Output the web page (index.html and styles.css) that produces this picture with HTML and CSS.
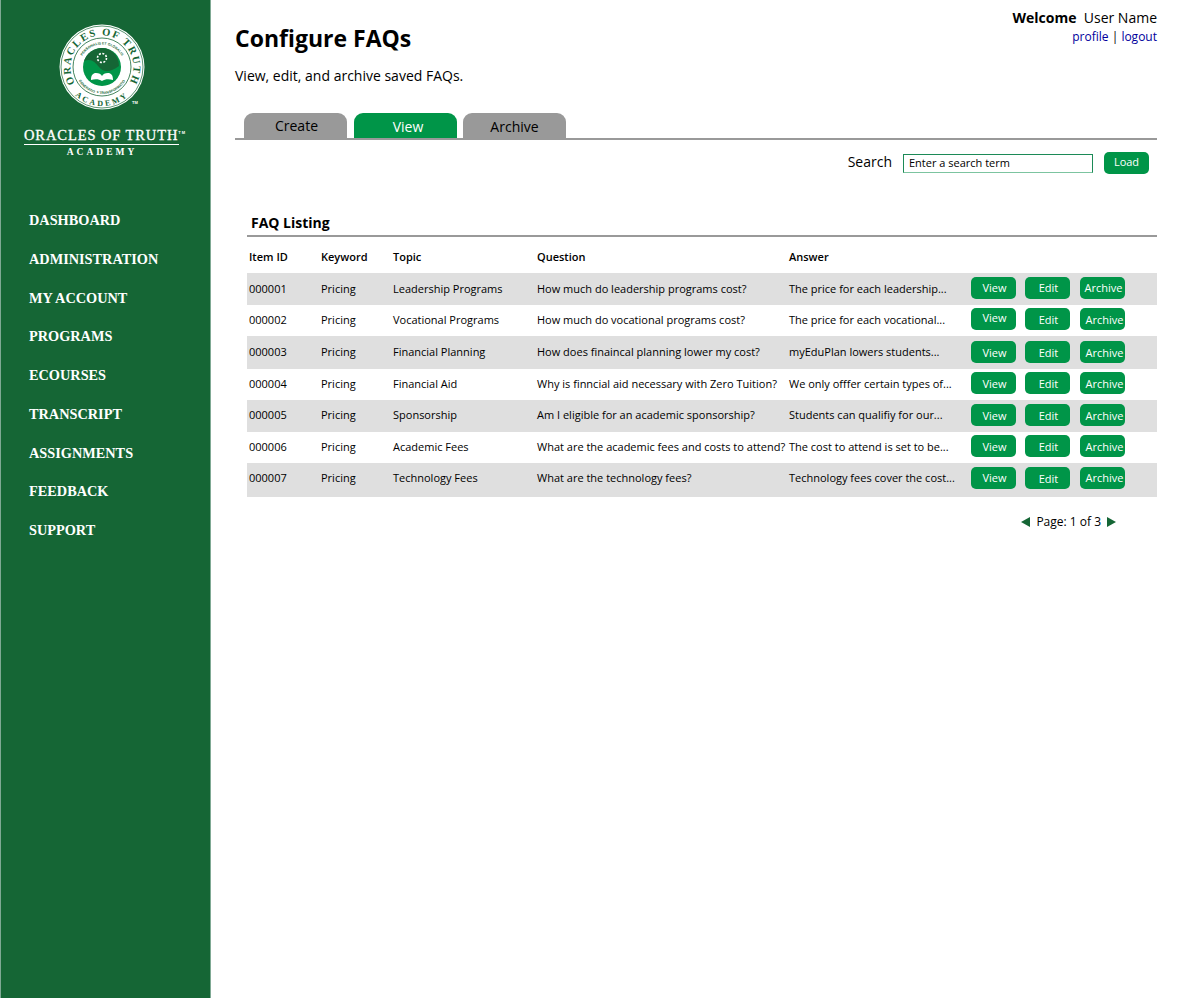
FILE: index.html
```html
<!DOCTYPE html>
<html lang="en">
<head>
  <meta charset="UTF-8">
  <title>Configure FAQs</title>
  <link rel="stylesheet" href="styles.css">
</head>
<body>
<div id="sidebar">
  <div class="logo">
    <svg class="seal" width="90" height="90" viewBox="0 0 90 90">
      <defs>
        <path id="arcName" d="M45 76.500a31.500 31.500 0 0 1 0-63a31.500 31.500 0 0 1 0 63"/>
        <path id="arcAcademy" d="M45 6a39 39 0 0 0 0 78a39 39 0 0 0 0-78"/>
        <path id="arcMottoTop" d="M45 67.500a22.500 22.500 0 0 1 0-45a22.500 22.500 0 0 1 0 45"/>
        <path id="arcMottoBottom" d="M45 18a27 27 0 0 0 0 54a27 27 0 0 0 0-54"/>
      </defs>
      <circle cx="45" cy="45" r="42.500" fill="#fff"/>
      <circle cx="45" cy="45" r="41" fill="none" stroke="#156635" stroke-width="0.7"/>
      <circle cx="45" cy="45" r="29" fill="none" stroke="#156635" stroke-width="0.8"/>
      <circle cx="45" cy="45" r="19" fill="#009548"/>
      <path d="M27 39c7-3 11 1 15 6 4 5 11 6 20-1C62 33 54 26 45 26c-8 0-15 5-18 13z" fill="#156635"/>
      <circle cx="45" cy="36" r="4.500" fill="none" stroke="#fff" stroke-width="1.600" stroke-dasharray="2 1.500"/>
      <path d="M34 58c0-5 2-7 5-7 3 0 5 1 6 3 1-2 3-3 6-3 3 0 5 2 5 7-4-1-8-1-11 1-3-2-7-2-11-1z" fill="#fff"/>
      <text class="seal-name"><textPath href="#arcName" startOffset="50%" text-anchor="middle">ORACLES OF TRUTH</textPath></text>
      <text class="seal-academy"><textPath href="#arcAcademy" startOffset="50%" text-anchor="middle">ACADEMY</textPath></text>
      <text class="seal-motto"><textPath href="#arcMottoTop" startOffset="50%" text-anchor="middle">PERSONALIS ET GLOBALIS</textPath></text>
      <text class="seal-motto"><textPath href="#arcMottoBottom" startOffset="50%" text-anchor="middle">GENERATIO ✦ TRANSFORMATIO</textPath></text>
    </svg>
    <span class="seal-tm">TM</span>
    <div class="logo-name">ORACLES OF TRUTH<sup>TM</sup></div>
    <div class="logo-sub">ACADEMY</div>
  </div>
  <ul class="nav">
    <li>DASHBOARD</li>
    <li>ADMINISTRATION</li>
    <li>MY ACCOUNT</li>
    <li>PROGRAMS</li>
    <li>ECOURSES</li>
    <li>TRANSCRIPT</li>
    <li>ASSIGNMENTS</li>
    <li>FEEDBACK</li>
    <li>SUPPORT</li>
  </ul>
</div>
<div id="main">
  <div class="head">
    <div>
      <h1>Configure FAQs</h1>
      <p class="intro">View, edit, and archive saved FAQs.</p>
    </div>
    <div class="user">
      <div class="user-name"><b>Welcome</b>&nbsp; User Name</div>
      <div class="user-links"><a href="#">profile</a> | <a href="#">logout</a></div>
    </div>
  </div>
  <ul class="tabs">
    <li class="create">Create</li>
    <li class="current">View</li>
    <li>Archive</li>
  </ul>
  <div class="search">
    <label for="term">Search</label>
    <input id="term" type="text" value="Enter a search term">
    <a class="btn load" href="#">Load</a>
  </div>
  <h2>FAQ Listing</h2>
  <table class="list">
    <thead>
      <tr>
        <th class="c-id">Item ID</th>
        <th class="c-key">Keyword</th>
        <th class="c-topic">Topic</th>
        <th class="c-q">Question</th>
        <th class="c-a">Answer</th>
        <th></th>
      </tr>
    </thead>
    <tbody>
      <tr class="odd h32 low">
        <td>000001</td><td>Pricing</td><td>Leadership Programs</td><td>How much do leadership programs cost?</td><td>The price for each leadership...</td>
        <td class="acts"><a class="btn mid" href="#">View</a><a class="btn mid" href="#">Edit</a><a class="btn mid tight" href="#">Archive</a></td>
      </tr>
      <tr class="h31">
        <td>000002</td><td>Pricing</td><td>Vocational Programs</td><td>How much do vocational programs cost?</td><td>The price for each vocational...</td>
        <td class="acts"><a class="btn up" href="#">View</a><a class="btn" href="#">Edit</a><a class="btn" href="#">Archive</a></td>
      </tr>
      <tr class="odd h33 low">
        <td>000003</td><td>Pricing</td><td>Financial Planning</td><td>How does finaincal planning lower my cost?</td><td>myEduPlan lowers students...</td>
        <td class="acts"><a class="btn" href="#">View</a><a class="btn" href="#">Edit</a><a class="btn" href="#">Archive</a></td>
      </tr>
      <tr class="h31">
        <td>000004</td><td>Pricing</td><td>Financial Aid</td><td>Why is finncial aid necessary with Zero Tuition?</td><td>We only offfer certain types of...</td>
        <td class="acts"><a class="btn" href="#">View</a><a class="btn" href="#">Edit</a><a class="btn" href="#">Archive</a></td>
      </tr>
      <tr class="odd h32">
        <td>000005</td><td>Pricing</td><td>Sponsorship</td><td>Am I eligible for an academic sponsorship?</td><td>Students can qualifiy for our...</td>
        <td class="acts"><a class="btn" href="#">View</a><a class="btn" href="#">Edit</a><a class="btn" href="#">Archive</a></td>
      </tr>
      <tr class="h31">
        <td>000006</td><td>Pricing</td><td>Academic Fees</td><td>What are the academic fees and costs to attend?</td><td>The cost to attend is set to be...</td>
        <td class="acts"><a class="btn" href="#">View</a><a class="btn" href="#">Edit</a><a class="btn" href="#">Archive</a></td>
      </tr>
      <tr class="odd h34">
        <td>000007</td><td>Pricing</td><td>Technology Fees</td><td>What are the technology fees?</td><td>Technology fees cover the cost...</td>
        <td class="acts"><a class="btn mid" href="#">View</a><a class="btn" href="#">Edit</a><a class="btn mid" href="#">Archive</a></td>
      </tr>
    </tbody>
  </table>
  <div class="pager">
    <span class="arrow prev"></span>
    <span>Page: 1 of 3</span>
    <span class="arrow next"></span>
  </div>
</div>
</body>
</html>
```

FILE: styles.css
```css
body, div, ul, li, h1, h2, p {
  margin: 0;
  padding: 0;
}

ul {
  list-style-type: none;
}

body {
  display: flex;
  min-height: 998px;
  background: #fff;
  color: #000;
  font: 14px/20px "Open Sans", Arial, sans-serif;
}

#sidebar {
  flex: 0 0 211px;
  box-sizing: border-box;
  background: #156635;
  border-left: 1px solid #7fa994;
  border-right: 1px solid #7fa994;
  color: #fff;
}

.logo {
  position: relative;
  padding-top: 22px;
  text-align: center;
}

.seal {
  display: block;
  margin-left: 56px;
}

.seal-name {
  fill: #156635;
  font: bold 10.500px "Liberation Serif", serif;
  letter-spacing: 1.600px;
}

.seal-academy {
  fill: #156635;
  font: bold 8px "Liberation Serif", serif;
  letter-spacing: 2.500px;
}

.seal-motto {
  fill: #156635;
  font: bold 3.500px "Liberation Sans", sans-serif;
}

.seal-tm {
  position: absolute;
  top: 100px;
  left: 131px;
  font: bold 4px/6px "Liberation Sans", sans-serif;
}

.logo-name {
  width: 155px;
  margin: 15px 0 0 23px;
  padding-bottom: 1px;
  border-bottom: 1px solid #fff;
  font: 14.500px/16px "Liberation Serif", serif;
  letter-spacing: 0.9px;
  -webkit-text-stroke: 0.3px #fff;
  text-align: left;
  white-space: nowrap;
}

.logo-name sup {
  font: bold 4px/4px "Liberation Sans", sans-serif;
  -webkit-text-stroke: 0;
  vertical-align: 6px;
}

.logo-sub {
  width: 160px;
  margin: 1px 0 0 21px;
  font: bold 9.500px/12px "Liberation Serif", serif;
  letter-spacing: 3px;
}

.nav {
  padding: 52px 0 0 28px;
}

.nav li {
  height: 38.750px;
  font: bold 14.300px/20px "Liberation Serif", serif;
  white-space: nowrap;
}

#main {
  flex: 1;
  min-width: 0;
  padding: 0 22px 0 24px;
}

.head {
  display: flex;
  justify-content: space-between;
  height: 113px;
}

h1 {
  padding-top: 22px;
  font-size: 23px;
  line-height: 33px;
  font-weight: 700;
}

.intro {
  margin-top: 11px;
}

.user {
  padding-top: 8px;
  text-align: right;
}

.user-links {
  font-size: 12px;
  line-height: 18px;
}

.user-links a {
  color: #00009c;
  text-decoration: none;
}

.tabs {
  display: flex;
  gap: 7px;
  padding-left: 9px;
  border-bottom: 2px solid #999;
}

.tabs li {
  width: 103px;
  height: 25px;
  background: #999;
  border-radius: 9px 9px 0 0;
  text-align: center;
  line-height: 28px;
}

.tabs li:last-child {
  margin-left: -1px;
}

.tabs li.create {
  line-height: 26px;
  text-indent: 2px;
}

.tabs li.current {
  background: #009548;
  color: #fff;
  text-indent: 5px;
}

.search {
  display: flex;
  align-items: center;
  justify-content: flex-end;
  height: 22px;
  margin-top: 12px;
  padding-right: 8px;
}

.search label {
  padding-bottom: 2px;
}

.search input {
  box-sizing: border-box;
  width: 190px;
  height: 19px;
  margin: 0 11px;
  padding: 0 5px 2px;
  border: 1px solid #1c8a57;
  border-bottom-color: #7cc4a0;
  font: 11px "Open Sans", Arial, sans-serif;
}

.btn {
  box-sizing: border-box;
  display: block;
  width: 45px;
  height: 22px;
  background: #009548;
  border-radius: 5px;
  color: #fff;
  font-size: 11px;
  line-height: 23px;
  text-align: center;
  text-decoration: none;
}

.load {
  line-height: 19px;
}

h2 {
  margin: 39px 0 0 16px;
  font-size: 14px;
  line-height: 20px;
}

.list {
  width: 910px;
  margin: 2px 0 0 12px;
  border-collapse: collapse;
  border-top: 2px solid #999;
  font-size: 11px;
  table-layout: fixed;
  white-space: nowrap;
}

.list thead tr {
  height: 37px;
}

.list th {
  padding: 3px 0 0 2px;
  font-weight: 600;
  text-align: left;
}

.list td {
  padding: 5px 0 0 2px;
  vertical-align: top;
}

.list .low td {
  padding-top: 6px;
}

.c-id, .c-key {
  width: 70px;
}

.c-topic {
  width: 142px;
}

.c-q {
  width: 250px;
}

.c-a {
  width: 180px;
}

.odd {
  background: #dfdfdf;
}

.h31 {
  height: 31px;
}

.h32 {
  height: 32px;
}

.h33 {
  height: 33px;
}

.h34 {
  height: 34px;
}

.list .h31 .acts {
  padding-top: 3px;
}

.list .h32 .acts, .list .h34 .acts {
  padding-top: 4px;
}

.list .h33 .acts {
  padding-top: 5px;
}

.acts {
  font-size: 0;
}

.acts .btn {
  display: inline-block;
  margin-right: 9px;
  font-size: 11px;
  text-indent: 2px;
  vertical-align: top;
}

.acts .btn:last-child {
  margin: 0 0 0 1px;
  text-indent: 4px;
}

.acts .btn.tight {
  text-indent: 2px;
}

.acts .btn.mid {
  line-height: 21px;
}

.acts .btn.up {
  line-height: 19px;
}

.pager {
  display: flex;
  align-items: center;
  justify-content: flex-end;
  gap: 6px;
  margin-top: 15px;
  padding-right: 41px;
  font-size: 12px;
}

.arrow {
  width: 0;
  height: 0;
  border-top: 5px solid transparent;
  border-bottom: 5px solid transparent;
}

.prev {
  border-right: 9px solid #156635;
}

.next {
  border-left: 9px solid #156635;
}
```
